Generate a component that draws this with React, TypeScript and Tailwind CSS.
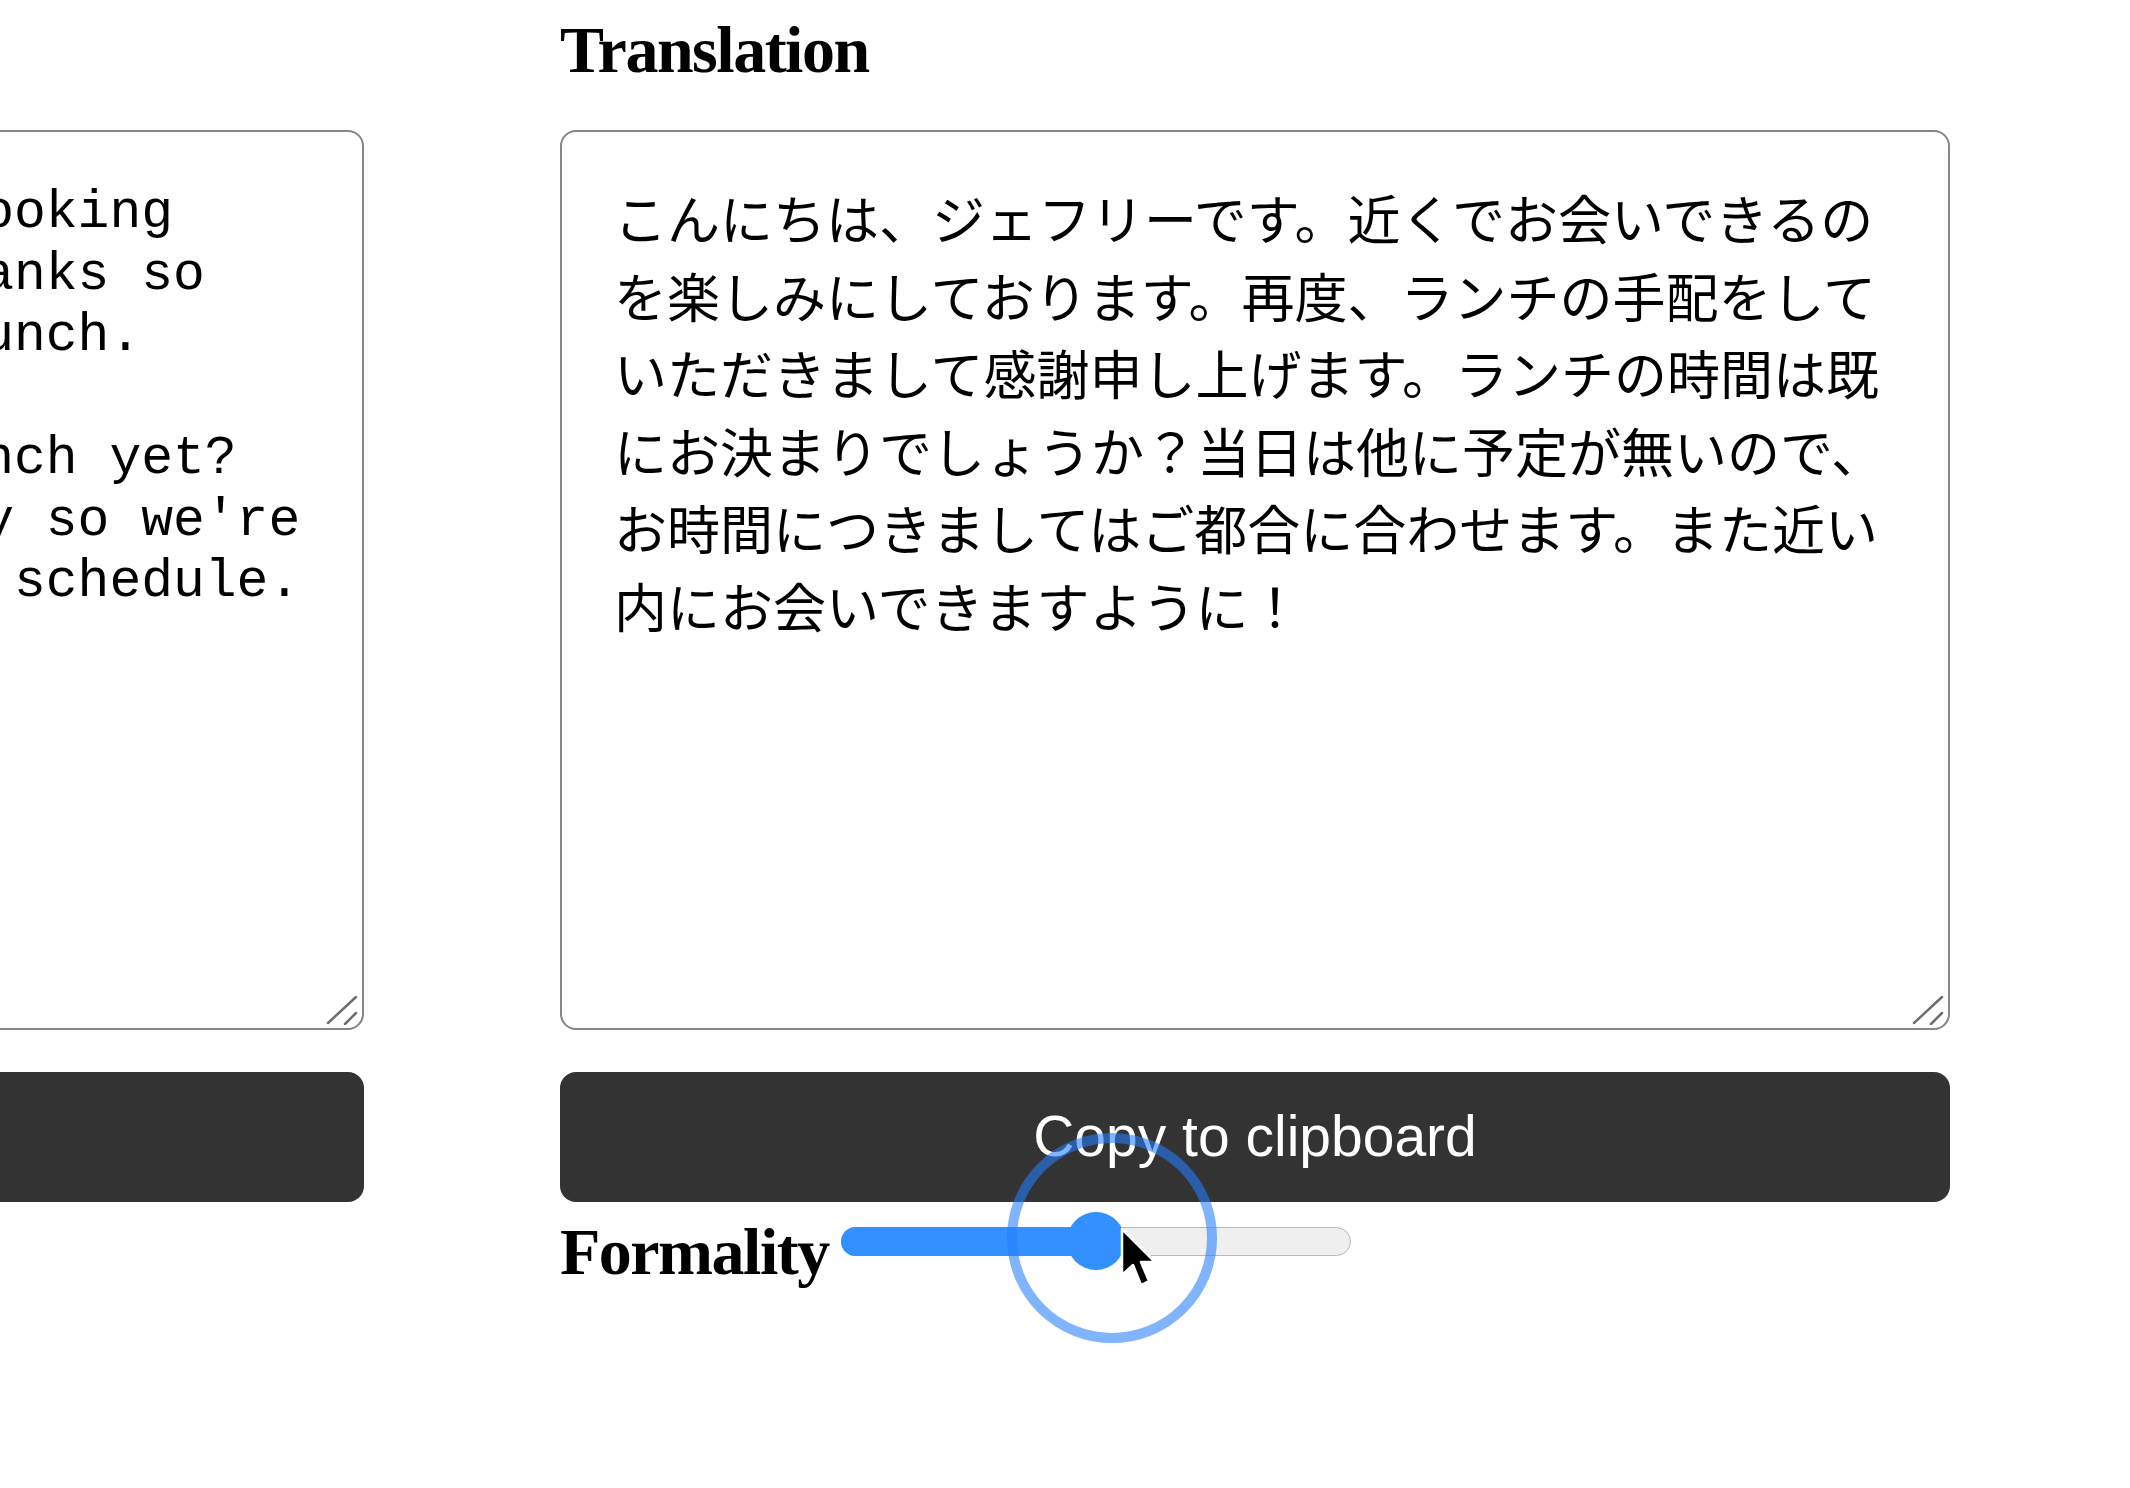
import { useState } from "react";

// source text, broken by hand so the monospace lines end where the screenshot shows them
const SOURCE = [
  "Hi, it's Jeffrey. I'm really looking",
  "forward to seeing you soon. Thanks so",
  "much again for arranging our lunch.",
  "",
  "Did you decide the time for lunch yet?",
  "We have no other plans that day so we're",
  "flexible and happy to fit your schedule.",
].join("\n");

const TRANSLATION =
  "こんにちは、ジェフリーです。近くでお会いできるのを楽しみにしております。再度、ランチの手配をしていただきまして感謝申し上げます。ランチの時間は既にお決まりでしょうか？当日は他に予定が無いので、お時間につきましてはご都合に合わせます。また近い内にお会いできますように！";

const SERIF = "font-['Liberation_Serif','Times_New_Roman',serif]";

/** textarea corner grip (drawn: the native one is tiny at dpr 1) */
function Grip() {
  return (
    <svg className="pointer-events-none absolute bottom-[5px] right-[6px]" width="32" height="32" viewBox="0 0 32 32">
      <path d="M2 30 L30 4 M19 31 L30 20" stroke="#6e6e6e" strokeWidth="2.5" strokeLinecap="round" />
    </svg>
  );
}

function Slider({ value, onChange }: { value: number; onChange: (v: number) => void }) {
  const width = 510;
  const thumb = 58;
  const left = ((width - thumb) * value) / 100;
  return (
    <div
      role="slider"
      aria-label="Formality"
      aria-valuenow={value}
      aria-valuemin={0}
      aria-valuemax={100}
      className="relative flex h-[58px] w-[510px] cursor-pointer items-center"
      onClick={(e) => {
        const r = e.currentTarget.getBoundingClientRect();
        const v = ((e.clientX - r.left - thumb / 2) / (width - thumb)) * 100;
        onChange(Math.max(0, Math.min(100, Math.round(v))));
      }}
    >
      <div className="relative h-[29px] w-full">
        <div className="absolute inset-0 rounded-full border border-[#b9b9b9] bg-[#efefef]" />
        <div className="absolute inset-y-0 left-0 rounded-full bg-[#3391ff]" style={{ width: left + thumb / 2 }} />
      </div>
      <div className="absolute top-0 h-[58px] w-[58px] rounded-full bg-[#3391ff]" style={{ left }} />
    </div>
  );
}

export default function App() {
  const [formality, setFormality] = useState(50);

  return (
    <div className="relative min-h-screen w-full overflow-hidden bg-white">
      <div className="ml-[-1026px] flex gap-[196px] pt-[17px]">
        {/* source column, mostly scrolled out of view */}
        <div className="flex w-[1390px] shrink-0 flex-col">
          <div className="h-[66px]" />
          <div className="relative mt-[47px]">
            <textarea
              readOnly
              aria-label="Source text"
              defaultValue={SOURCE}
              className="block h-[900px] w-full resize-none overflow-hidden rounded-[16px] border-2 border-[#878787] bg-white px-[52px] pt-[51px] font-['Liberation_Mono','Courier_New',monospace] text-[53px] leading-[61.5px] text-black outline-none"
            />
            <Grip />
          </div>
          <button aria-label="Translate" className="mt-[42px] h-[130px] w-full rounded-[16px] bg-[#333333]" />
        </div>

        {/* translation column */}
        <div className="flex w-[1390px] shrink-0 flex-col">
          <h2 className={`h-[66px] text-[66px] font-bold leading-[66px] tracking-[-1.5px] text-black ${SERIF}`}>
            Translation
          </h2>
          <div className="relative mt-[47px]">
            <textarea
              readOnly
              aria-label="Translation"
              defaultValue={TRANSLATION}
              className="block h-[900px] w-full resize-none overflow-hidden rounded-[16px] border-2 border-[#878787] bg-white px-[52px] pt-[47px] font-['Noto_Sans_CJK_JP','Noto_Sans',sans-serif] text-[53px] leading-[77.5px] text-black outline-none"
            />
            <Grip />
          </div>
          <button className="mt-[42px] flex h-[130px] w-full items-center justify-center rounded-[16px] bg-[#333333] font-['Liberation_Sans',Arial,sans-serif] text-[57px] text-white">
            Copy to clipboard
          </button>
          <div className="mt-[10px] flex items-start gap-[12px]">
            <span className={`mt-[7px] text-[66px] font-bold leading-[66px] tracking-[-1.5px] text-black ${SERIF}`}>
              Formality
            </span>
            <Slider value={formality} onChange={setFormality} />
          </div>
        </div>
      </div>

      {/* click highlight + pointer from the screen recording */}
      <div className="pointer-events-none absolute left-[1007px] top-[1133px] h-[210px] w-[210px] rounded-full border-[10px] border-[rgba(36,125,255,0.58)]" />
      <svg
        className="pointer-events-none absolute left-[1120px] top-[1226px]"
        width="38"
        height="64"
        viewBox="-2 -2 38 62"
      >
        <path d="M0 0 L0 46 L11 36 L19 56 L27 52 L19 33 L33 33 Z" fill="#000" stroke="#fff" strokeWidth="2.5" strokeLinejoin="round" />
      </svg>
    </div>
  );
}
